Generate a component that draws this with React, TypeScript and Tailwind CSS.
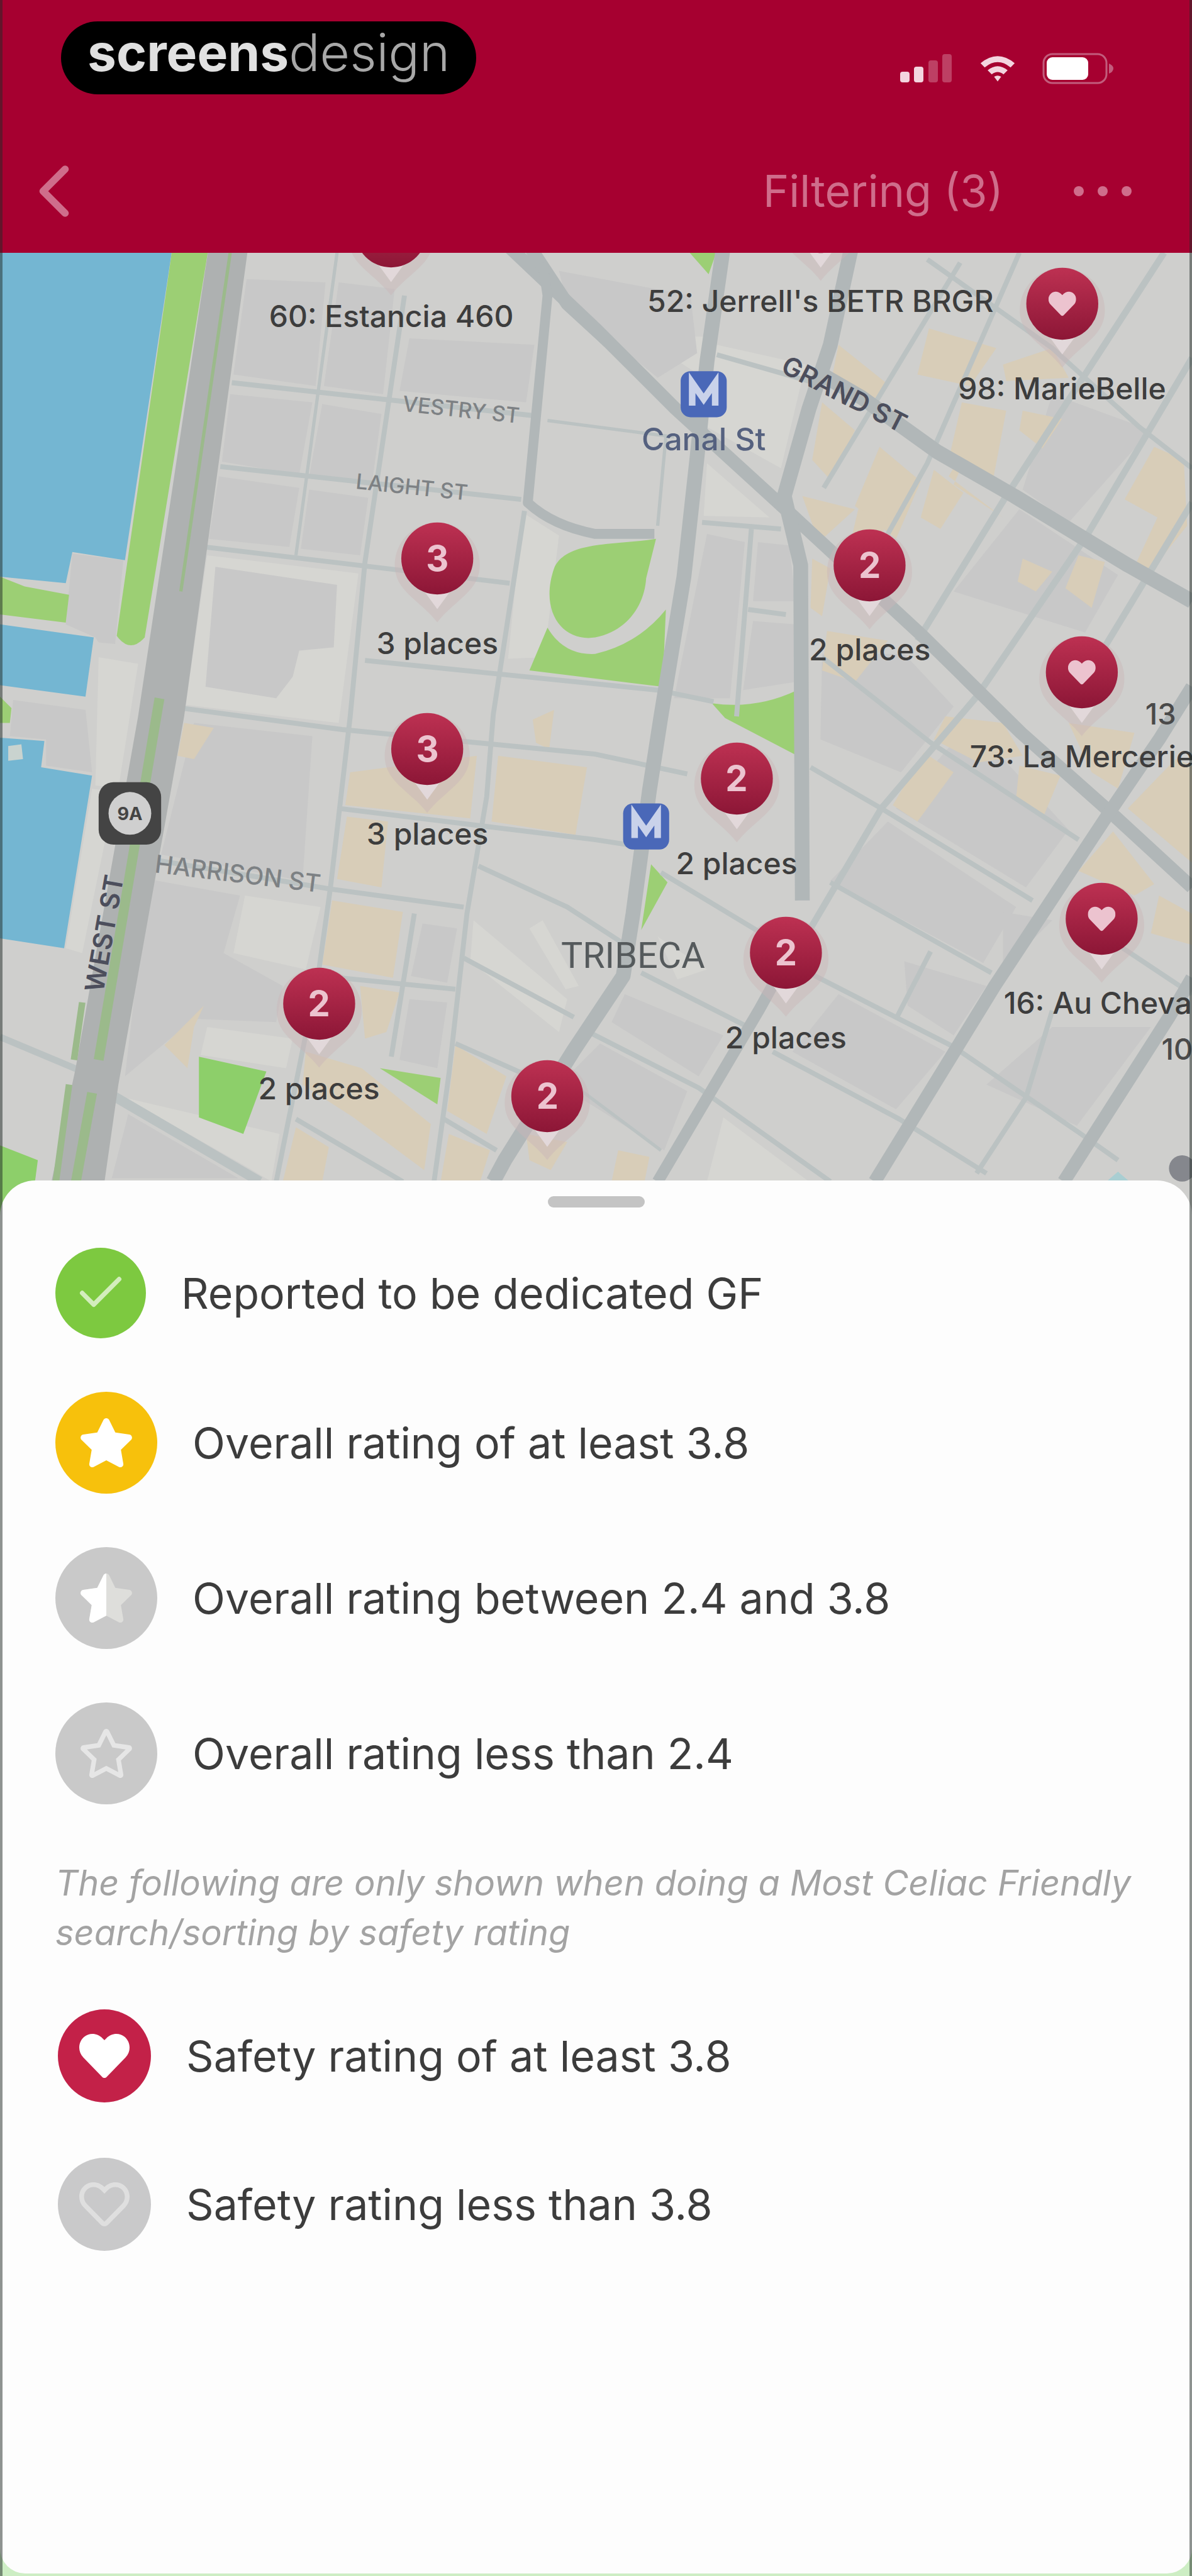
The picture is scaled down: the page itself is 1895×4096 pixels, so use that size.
import { FaHeart, FaRegHeart, FaRegStar, FaStar } from 'react-icons/fa';
import { Check, ChevronLeft } from 'lucide-react';

type Pin = { x: number; y: number; count?: number; label?: string };
type Road = { d: string; w: number };

// Map space is 725 x 590 units, with the header edge at y = 154.
const MAP_TOP = 154;
const MAP_WIDTH = 725;
const MAP_HEIGHT = 590;

const pins: Pin[] = [
  { x: 238, y: 141, label: '60: Estancia 460' },
  { x: 499, y: 132, label: "52: Jerrell's BETR BRGR" },
  { x: 646, y: 185, label: '98: MarieBelle' },
  { x: 266, y: 340, count: 3, label: '3 places' },
  { x: 529, y: 344, count: 2, label: '2 places' },
  { x: 658, y: 409, label: '73: La Mercerie' },
  { x: 260, y: 456, count: 3, label: '3 places' },
  { x: 448, y: 474, count: 2, label: '2 places' },
  { x: 670, y: 559, label: '16: Au Cheval' },
  { x: 478, y: 580, count: 2, label: '2 places' },
  { x: 194, y: 611, count: 2, label: '2 places' },
  { x: 333, y: 667, count: 2 },
];

const water = [
  'M0 150H105L76 341L44 336L40 355L0 351Z',
  'M0 380L57 388L52 424L0 417Z',
  'M0 449L27 451L25 467L56 472L39 577L0 571Z',
];

const parks = [
  'M105 150H127L88 388Q79 398 71 387Z',
  'M0 351L15 357L42 362L40 379L0 374Z',
  'M0 424L7 431L6 440H0Z',
  'M399 328C374 332 344 329 337 346C328 372 342 391 362 388C382 384 392 368 393 352Z',
  'M333 382Q343 399 362 398Q388 392 405 371L403 418L322 408Z',
  'M433 428Q460 432 485 420V460L441 437Z',
  'M396 526L406 537L390 566Z',
  'M416 150H437L431 167Z',
  'M231 650L268 656L266 672Z',
];

const lightBlocks = [
  'M126 338L218 349L206 440L113 429Z',
  'M318 312L340 326L331 400L309 401Z',
  'M430 282L468 315L428 314Z',
  'M436 210L490 222L475 285L430 260Z',
  'M60 400L84 404L72 480L58 478Z',
  'M56 480L70 482L50 580L40 577Z',
  'M149 545L195 552L186 590L142 580Z',
  'M126 625L178 632L174 650L122 642Z',
  'M76 668L170 690L165 719L150 710Z',
  'M288 560L345 608L340 628L286 585Z',
  'M330 560L352 600L344 602L322 565Z',
  'M400 570L430 590L412 596Z',
  'M440 680L492 719H430Z',
  'M410 205H428V230L405 215Z',
];

const darkBlocks = [
  'M44 337L75 341L70 392L60 391L58 388L40 380Z',
  'M8 426L52 432L56 470L28 466L28 450L6 448Z',
  'M131 345L205 356L203 394L182 396L178 412L168 425L125 418Z',
  'M150 170L198 172L192 235L142 228Z',
  'M206 172L240 176L233 240L197 235Z',
  'M249 206L325 210L320 245L243 238Z',
  'M140 240L190 245L182 289L135 281Z',
  'M196 246L232 252L226 296L188 290Z',
  'M133 290L182 297L176 333L127 328Z',
  'M188 298L224 303L219 338L183 334Z',
  'M118 440L190 448L184 536L98 520Z',
  'M90 535L146 545L136 580L172 600L168 622L118 620L76 655Z',
  'M257 562L278 565L272 598L250 594Z',
  'M249 608L272 610L266 650L243 645Z',
  'M430 325L453 330L444 425L410 425Z',
  'M461 330L480 332L484 366L458 366Z',
  'M458 378L484 380V415L452 420Z',
  'M340 165L420 180L424 215L400 230L345 185Z',
  'M380 605L440 630L425 655L372 622Z',
  'M365 635L418 664L404 700L340 660Z',
  'M500 398L550 398L580 430L548 470L499 450Z',
  'M590 440L650 505L624 540L545 492Z',
  'M540 500L618 552L598 586L505 536Z',
  'M620 310L680 350L660 385L580 360Z',
  'M640 240L700 262L650 318L622 298Z',
  'M510 605L575 640L545 675L482 640Z',
  'M640 625L700 625L655 685L600 660Z',
  'M610 555L640 560L610 590Z',
  'M550 585L600 600L580 630L552 612Z',
  'M78 678L145 717H68Z',
];

const shops = [
  'M510 210L540 234L532 243L506 230Z',
  'M565 200L606 212L590 235L558 228Z',
  'M600 250L580 295L610 315L577 290Z',
  'M585 245L612 250L604 292L577 280Z',
  'M622 250L646 255L634 273L620 262Z',
  'M500 245L520 262L505 292L494 280Z',
  'M535 272L560 293L545 328L520 308Z',
  'M522 310L540 314L532 342L515 340Z',
  'M568 286L586 300L572 322L560 315Z',
  'M488 302L520 310L498 330Z',
  'M610 222L640 212L650 230L612 232Z',
  'M702 272L720 280L722 320L698 350L690 345L704 315L684 304Z',
  'M622 340L640 348L630 360L619 354Z',
  'M656 338L672 342L664 370L648 358Z',
  'M494 340L505 346L500 375L493 370Z',
  'M503 384L540 390L520 415L500 408Z',
  'M575 436L610 440L622 460L595 464L568 450Z',
  'M562 458L580 470L558 500L543 490Z',
  'M620 466L645 472L635 496L618 486Z',
  'M650 440L690 446L680 480L664 470Z',
  'M715 462L725 466V525L686 492Z',
  'M677 506L702 538L690 545L656 530Z',
  'M705 545L725 556V575L700 568Z',
  'M213 470L290 460L286 498L210 490Z',
  'M303 460L357 467L350 508L299 500Z',
  'M211 497L236 500L232 540L205 535Z',
  'M202 548L245 555L239 595L196 587Z',
  'M219 600L243 604L235 628L222 632Z',
  'M324 438L337 432L334 456L326 452Z',
  'M112 440L130 443L118 462L108 460Z',
  'M118 625L124 612L108 628L100 636L114 650Z',
  'M186 640L220 650L262 684L258 712L215 680L184 660Z',
  'M180 686L200 698L196 719H172Z',
  'M277 636L308 655L296 690L272 676Z',
  'M273 690L298 700L292 719H268Z',
  'M320 690L345 695L335 712L322 706Z',
  'M376 700L395 704L392 719H372Z',
];

const roads: Road[] = [
  // left grid
  { d: 'M205 154L180 338', w: 2 },
  { d: 'M246 180L222 342L213 436L201 540L194 590L176 679L168 719', w: 3 },
  { d: 'M319 311L300 435L296 485L284 556L273 654L264 719', w: 3 },
  { d: 'M252 556L238 643', w: 3 },
  { d: 'M141 233L324 253', w: 3 },
  { d: 'M134 284L317 304', w: 3 },
  { d: 'M125 333L310 355', w: 3 },
  { d: 'M111 431L208 444L362 459L418 471', w: 3 },
  { d: 'M206 492L362 511L388 515', w: 3 },
  { d: 'M92 523L201 541L282 552', w: 3 },
  { d: 'M196 594L277 602', w: 3 },
  { d: 'M222 402L400 420L434 427', w: 3 },
  { d: 'M291 527L345 552L382 576', w: 3 },
  { d: 'M282 583L349 619', w: 3 },
  { d: 'M277 635L322 655', w: 3 },
  { d: 'M180 681L245 719', w: 3 },
  { d: 'M270 681L302 700', w: 3 },
  { d: 'M0 631L50 652', w: 4 },
  { d: 'M64 664L158 719', w: 6 },
  // centre
  { d: 'M333 256L410 266', w: 2 },
  { d: 'M427 318L475 322', w: 3 },
  { d: 'M405 266L400 320', w: 2 },
  { d: 'M457 322L448 436', w: 3 },
  { d: 'M455 371L478 374', w: 3 },
  { d: 'M436 216L492 232', w: 3 },
  { d: 'M402 531L470 572', w: 3 },
  { d: 'M390 592L455 625', w: 3 },
  { d: 'M356 627L425 662L505 719', w: 3 },
  { d: 'M470 640L547 681L600 714', w: 3 },
  { d: 'M342 655L402 700', w: 2 },
  // right grid
  { d: 'M584 160L501 297', w: 3 },
  { d: 'M620 154L564 282L540 325', w: 3 },
  { d: 'M708 154L612 302L558 390', w: 4 },
  { d: 'M725 218L661 326L594 424L536 492L490 570', w: 4 },
  { d: 'M725 306L679 382L650 430', w: 4 },
  { d: 'M564 158L640 212L693 260L725 285', w: 3 },
  { d: 'M493 467L536 492L628 548', w: 3 },
  { d: 'M500 400L566 452L656 511', w: 3 },
  { d: 'M505 537L603 592', w: 3 },
  { d: 'M492 592L580 637L656 689L680 706', w: 3 },
  { d: 'M566 579L545 620', w: 3 },
  { d: 'M640 615L624 668L594 714', w: 3 },
  { d: 'M680 575L725 605', w: 3 },
];

const mainRoads: Road[] = [
  { d: 'M498 227L524 242L570 275L617 302L686 344L725 366', w: 9 },
  { d: 'M305 146L362 200L410 248L480 312L561 387L621 446L675 494L725 540', w: 8 },
  { d: 'M322 150L345 185L370 208', w: 8 },
  { d: 'M440 150L430 220L424 278L416 351L402 436L395 481L385 556L379 594L349 639L307 706L300 719', w: 9 },
  { d: 'M518 150L505 210L492 249L477 302L487 344L488 548', w: 9 },
  { d: 'M478 585L462 614L400 719', w: 7 },
  { d: 'M330 160L333 180L321 306Q336 320 362 325L398 325', w: 6 },
  { d: 'M725 418L705 450L675 494L605 600L532 719', w: 8 },
  { d: 'M725 595L711 619L647 719', w: 8 },
];

function PinMarker({ pin }: { pin: Pin }) {
  const left = `${(pin.x / MAP_WIDTH) * 100}%`;
  const top = `${((pin.y - MAP_TOP) / MAP_HEIGHT) * 100}%`;

  return (
    <button
      type="button"
      aria-label={pin.label ?? `${pin.count} places`}
      className="absolute -mt-[65px] flex w-max -translate-x-1/2 flex-col items-center"
      style={{ left, top }}
    >
      <span className="relative block">
        <svg className="w-[156px]" viewBox="-30 -25 60 66" aria-hidden="true">
          <defs>
            <linearGradient id="pin" x1="0" y1="0" x2="0" y2="1">
              <stop offset="0" stopColor="#bd3152" />
              <stop offset="1" stopColor="#8c1636" />
            </linearGradient>
          </defs>
          <path
            d="M-26 4A26 26 0 0 1 26 4C26 20 11 25 0 39C-11 25 -26 20 -26 4Z"
            fill="#c9b5b9"
            opacity="0.45"
          />
          <path d="M-8 20L0 31L8 20Z" fill="#e2d8da" />
          <circle r="22" fill="url(#pin)" />
        </svg>
        <span className="absolute inset-x-0 top-0 flex h-[130px] items-center justify-center text-[56px] font-bold leading-none text-[#ecc3cf]">
          {pin.count ?? <FaHeart className="size-11" />}
        </span>
      </span>
      {pin.label && (
        <span className="whitespace-nowrap text-[48px] font-medium leading-[56px] text-[#3d3d3d]">
          {pin.label}
        </span>
      )}
    </button>
  );
}

function MetroBadge({ x, y }: { x: number; y: number }) {
  return (
    <g transform={`translate(${x} ${y})`}>
      <rect x="-14" y="-14" width="28" height="28" rx="6" fill="#4a68b8" />
      <path
        d="M-7 7V-7L0 3L7 -7V7"
        fill="none"
        stroke="#c9d2ea"
        strokeWidth="4"
      />
    </g>
  );
}

function CityMap() {
  return (
    <svg
      className="block h-auto w-full"
      viewBox="0 154 725 590"
      fontFamily="Inter, sans-serif"
      textAnchor="middle"
      aria-label="Map of Tribeca"
    >
      <rect y="150" width="725" height="600" fill="#cfcfcd" />
      {lightBlocks.map((d) => (
        <path key={d} d={d} fill="#d6d6d2" />
      ))}
      {darkBlocks.map((d) => (
        <path key={d} d={d} fill="#c8c8c8" />
      ))}
      {shops.map((d) => (
        <path key={d} d={d} fill="#d8cdb8" />
      ))}
      {water.map((d) => (
        <path key={d} d={d} fill="#74b6d2" />
      ))}
      <path d="M5 454L13 453L14 462L5 463Z" fill="#c9d3cf" />
      {parks.map((d) => (
        <path key={d} d={d} fill="#9ccf74" />
      ))}
      <path d="M121 643L162 652L148 690L121 680Z" fill="#8dcf6a" />
      <path d="M0 697L23 706L18 744H0Z" fill="#8dcf6a" />

      <g fill="none" stroke="#bbc2c2">
        {roads.map((road) => (
          <path key={road.d} d={road.d} strokeWidth={road.w} />
        ))}
      </g>
      <g fill="none" stroke="#b1b7b8" strokeLinejoin="round">
        {mainRoads.map((road) => (
          <path key={road.d} d={road.d} strokeWidth={road.w} />
        ))}
      </g>

      {/* West St */}
      <path d="M127 150H151L112 436L72 660L60 744H26L46 650L84 436Z" fill="#aeb1b1" />
      <g fill="none" stroke="#9bba8b">
        <path d="M140 154L110 360" strokeWidth="2" />
        <path d="M97 425L60 645" strokeWidth="6" />
        <path d="M56 665L46 720" strokeWidth="6" />
        <path d="M50 610L45 645M42 660L34 719" strokeWidth="4" />
      </g>

      <g transform="translate(79 495)">
        <rect x="-19" y="-19" width="38" height="38" rx="9" fill="#444" />
        <circle r="13" fill="#cfcfcf" />
        <text y="4" fontSize="11" fontWeight="700" fill="#444">
          9A
        </text>
      </g>
      <MetroBadge x={428} y={240} />
      <MetroBadge x={393} y={503} />

      <g fill="#7d8184" fontSize="13" fontWeight="500">
        <text transform="translate(280 254) rotate(6)">VESTRY ST</text>
        <text transform="translate(250 301) rotate(6)">LAIGHT ST</text>
        <text fontSize="15" transform="translate(144 537) rotate(7)">
          HARRISON ST
        </text>
      </g>
      <g fill="#4c4e5c" fontSize="16" fontWeight="600">
        <text transform="translate(511 245) rotate(27)">GRAND ST</text>
        <text transform="translate(69 569) rotate(-80)">WEST ST</text>
      </g>
      <text x="428" y="274" fontSize="19" fontWeight="500" fill="#55617f">
        Canal St
      </text>
      <text x="385" y="589" fontSize="22" fill="#555a5c" fontFamily="Roboto, sans-serif">
        TRIBECA
      </text>
      <g fill="#4a4a4a" fontSize="18" fontWeight="500">
        <text x="706" y="441">13</text>
        <text x="716" y="645">10</text>
      </g>
      <path d="M673 719L680 713L687 719Z" fill="#a9ced2" />
      <circle cx="719" cy="711" r="8" fill="#85878d" />
    </svg>
  );
}

function StatusIcons() {
  return (
    <div className="flex items-center gap-[42px] text-white">
      <svg className="h-12 w-[84px]" viewBox="0 0 84 48" fill="#f3d5df" aria-label="Signal">
        <rect y="29" width="15" height="17" rx="4" />
        <rect x="22" y="21" width="15" height="25" rx="4" />
        <rect x="45" y="11" width="15" height="35" rx="4" opacity="0.3" />
        <rect x="67" y="1" width="15" height="45" rx="4" opacity="0.3" />
      </svg>
      <svg className="h-12 w-[58px]" viewBox="0 0 62 48" aria-label="Wi-Fi">
        <path d="M2 15Q31 -9 60 15L53 22Q31 4 9 22Z" fill="#f3d5df" />
        <path d="M14 27Q31 13 48 27L41 34Q31 26 21 34Z" fill="#f3d5df" />
        <path d="M25 38Q31 34 37 38L31 46Z" fill="#f3d5df" />
      </svg>
      <svg className="h-[50px] w-[114px]" viewBox="0 0 114 50" aria-label="Battery">
        <rect x="2" y="2" width="100" height="46" rx="14" fill="none" stroke="#c25c7c" strokeWidth="3" />
        <rect x="7" y="7" width="66" height="36" rx="9" fill="#fff" />
        <path d="M106 17Q113 20 113 25Q113 30 106 33Z" fill="#c25c7c" />
      </svg>
    </div>
  );
}

function HalfStar() {
  return (
    <span className="relative block size-[88px]">
      <FaStar className="size-full text-[#dededb]" />
      <span className="absolute inset-y-0 left-0 w-1/2 overflow-hidden">
        <FaStar className="size-[88px] text-white" />
      </span>
    </span>
  );
}

const overallRows = [
  {
    text: 'Reported to be dedicated GF',
    circle: 'size-36 bg-[#7dc940]',
    icon: <Check className="size-[88px] text-[#d3edbd]" strokeWidth={2} />,
  },
  {
    text: 'Overall rating of at least 3.8',
    circle: 'size-[162px] bg-[#f7c10c]',
    icon: <FaStar className="size-[88px] text-white" />,
  },
  {
    text: 'Overall rating between 2.4 and 3.8',
    circle: 'size-[162px] bg-[#c9c9c9]',
    icon: <HalfStar />,
  },
  {
    text: 'Overall rating less than 2.4',
    circle: 'size-[162px] bg-[#c9c9c9]',
    icon: <FaRegStar className="size-[88px] text-[#e6e6e6]" />,
  },
];

const safetyRows = [
  {
    text: 'Safety rating of at least 3.8',
    circle: 'size-[148px] bg-[#c32148]',
    icon: <FaHeart className="size-20 text-white" />,
  },
  {
    text: 'Safety rating less than 3.8',
    circle: 'size-[148px] bg-[#c9c9ca]',
    icon: <FaRegHeart className="size-20 text-[#dfdfdf]" />,
  },
];

function LegendRow({ row }: { row: (typeof overallRows)[number] }) {
  return (
    <li className="flex items-center gap-14">
      <span
        className={`flex shrink-0 items-center justify-center rounded-full ${row.circle}`}
      >
        {row.icon}
      </span>
      <span className="text-[68px] leading-[80px] text-[#3c3c3c]">{row.text}</span>
    </li>
  );
}

export default function App() {
  return (
    <div className="relative flex min-h-screen flex-col overflow-hidden bg-[#cdeec4] font-['Inter',sans-serif]">
      <header className="flex h-[402px] flex-col bg-[#a60030]">
        <div className="flex items-start justify-between pl-[97px] pr-[124px] pt-[34px]">
          <p className="flex h-[116px] items-center rounded-full bg-black px-[42px] pb-4 text-[82px] leading-none">
            <span className="font-bold text-[#e0e0e0]">screens</span>
            <span className="font-light text-[#a8a8a8]">design</span>
          </p>
          <div className="pt-[50px]">
            <StatusIcons />
          </div>
        </div>
        <nav className="flex flex-1 items-center justify-between pl-4 pr-[96px] pt-14">
          <button type="button" aria-label="Back">
            <ChevronLeft className="size-[140px] text-[#cf6d8b]" strokeWidth={2} />
          </button>
          <div className="flex items-center gap-[112px] text-[#cf6d8b]">
            <button type="button" className="text-[70px] leading-[80px]">
              Filtering (3)
            </button>
            <button type="button" aria-label="More" className="flex gap-[22px]">
              <span className="size-4 rounded-full bg-current" />
              <span className="size-4 rounded-full bg-current" />
              <span className="size-4 rounded-full bg-current" />
            </button>
          </div>
        </nav>
      </header>

      <main className="flex flex-1 flex-col">
        <section className="relative overflow-hidden">
          <CityMap />
          {pins.map((pin) => (
            <PinMarker key={`${pin.x}-${pin.y}`} pin={pin} />
          ))}
        </section>

        <section className="relative -mt-[67px] mb-1 flex flex-1 flex-col rounded-t-[56px] rounded-b-[40px] bg-[#fdfdfd] px-[88px] pt-[25px]">
          <div className="h-[18px] w-[154px] self-center rounded-full bg-[#c4c4c4]" />
          <ul className="mt-16 flex flex-col gap-[85px]">
            {overallRows.map((row) => (
              <LegendRow key={row.text} row={row} />
            ))}
          </ul>
          <p className="-mr-5 mt-[86px] text-[56px] italic leading-[79px] text-[#a3a3a3]">
            The following are only shown when doing a Most Celiac Friendly
            search/sorting by safety rating
          </p>
          <ul className="mt-[82px] flex flex-col gap-[88px] pl-1">
            {safetyRows.map((row) => (
              <LegendRow key={row.text} row={row} />
            ))}
          </ul>
        </section>
      </main>

      <div className="pointer-events-none absolute inset-0 border-x-4 border-[#1f2a25]/50" />
    </div>
  );
}
